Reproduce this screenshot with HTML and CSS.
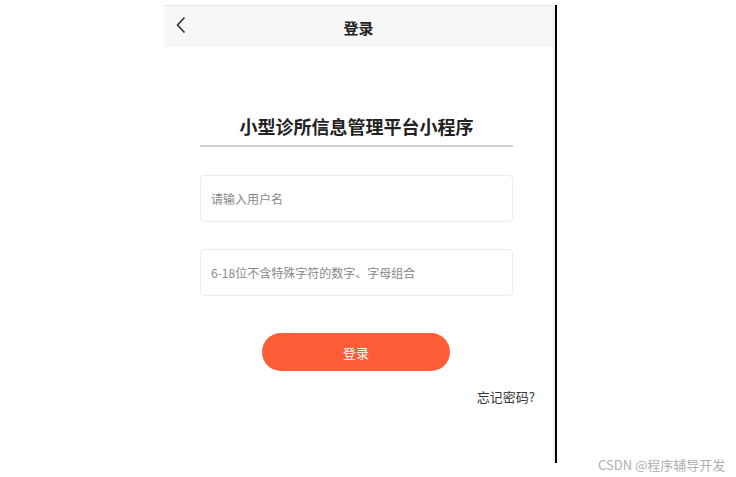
FILE: index.html
```html
<!DOCTYPE html>
<html lang="zh">
<head>
<meta charset="utf-8">
<title>登录</title>
<link rel="stylesheet" href="styles.css">
</head>
<body>
<div class="stage">
  <div class="phone">
    <div class="navbar">
      <svg class="back" width="12" height="18" viewBox="0 0 12 18"><path d="M9.5 1.5 L2.5 9 L9.5 16.5" fill="none" stroke="#333" stroke-width="1.6"/></svg>
      <div class="nav-title">登录</div>
    </div>
    <div class="content">
      <h1 class="heading">小型诊所信息管理平台小程序</h1>
      <div class="field"><span class="ph">请输入用户名</span></div>
      <div class="field"><span class="ph">6-18位不含特殊字符的数字、字母组合</span></div>
      <button class="login">登录</button>
      <div class="forgot">忘记密码?</div>
    </div>
  </div>
</div>
<div class="watermark">CSDN @程序辅导开发</div>
</body>
</html>
```
FILE: styles.css
```css
html, body {
  margin: 0;
  padding: 0;
  background: #fff;
  font-family: "Noto Sans CJK SC", "Liberation Sans", sans-serif;
}
.stage {
  width: 736px;
  height: 477px;
  position: relative;
  padding-top: 5px;
  box-sizing: border-box;
}
.phone {
  margin-left: 164px;
  width: 391px;
  height: 458px;
  border-right: 2px solid #000;
  box-shadow: inset -2px 0 0 #efefef;
}
.navbar {
  height: 41px;
  background: #f7f7f7;
  border-top: 1px solid #e8e8e8;
  display: flex;
  align-items: center;
  justify-content: center;
  position: relative;
  margin-right: 2px;
}
.back {
  position: absolute;
  left: 11px;
  top: 10px;
}
.nav-title {
  font-size: 15px;
  font-weight: 700;
  color: #222;
  margin-top: 2px;
}
.content {
  display: flex;
  flex-direction: column;
  align-items: center;
  padding-top: 67px;
  padding-right: 6px;
}
.heading {
  margin: 0;
  width: 313px;
  font-size: 18px;
  line-height: 24px;
  font-weight: 700;
  color: #222;
  text-align: center;
  padding-bottom: 7px;
  border-bottom: 2px solid #d2d2d2;
}
.field {
  width: 313px;
  height: 47px;
  box-sizing: border-box;
  border: 1px solid #ececec;
  border-radius: 4px;
  margin-top: 28px;
  display: flex;
  align-items: center;
  padding-left: 10px;
}
.field + .field {
  margin-top: 27px;
}
.ph {
  font-size: 12px;
  color: #888;
}
.login {
  margin-top: 37px;
  width: 188px;
  height: 38px;
  border: none;
  border-radius: 19px;
  background: #ff5c38;
  color: #fff;
  font-family: inherit;
  font-size: 13px;
  margin-right: 1px;
}
.forgot {
  align-self: flex-end;
  margin-right: 14px;
  margin-top: 16px;
  font-size: 13px;
  color: #333;
}
.watermark {
  position: absolute;
  left: 598px;
  top: 455px;
  font-size: 13px;
  color: #b0b0b0;
}
```
